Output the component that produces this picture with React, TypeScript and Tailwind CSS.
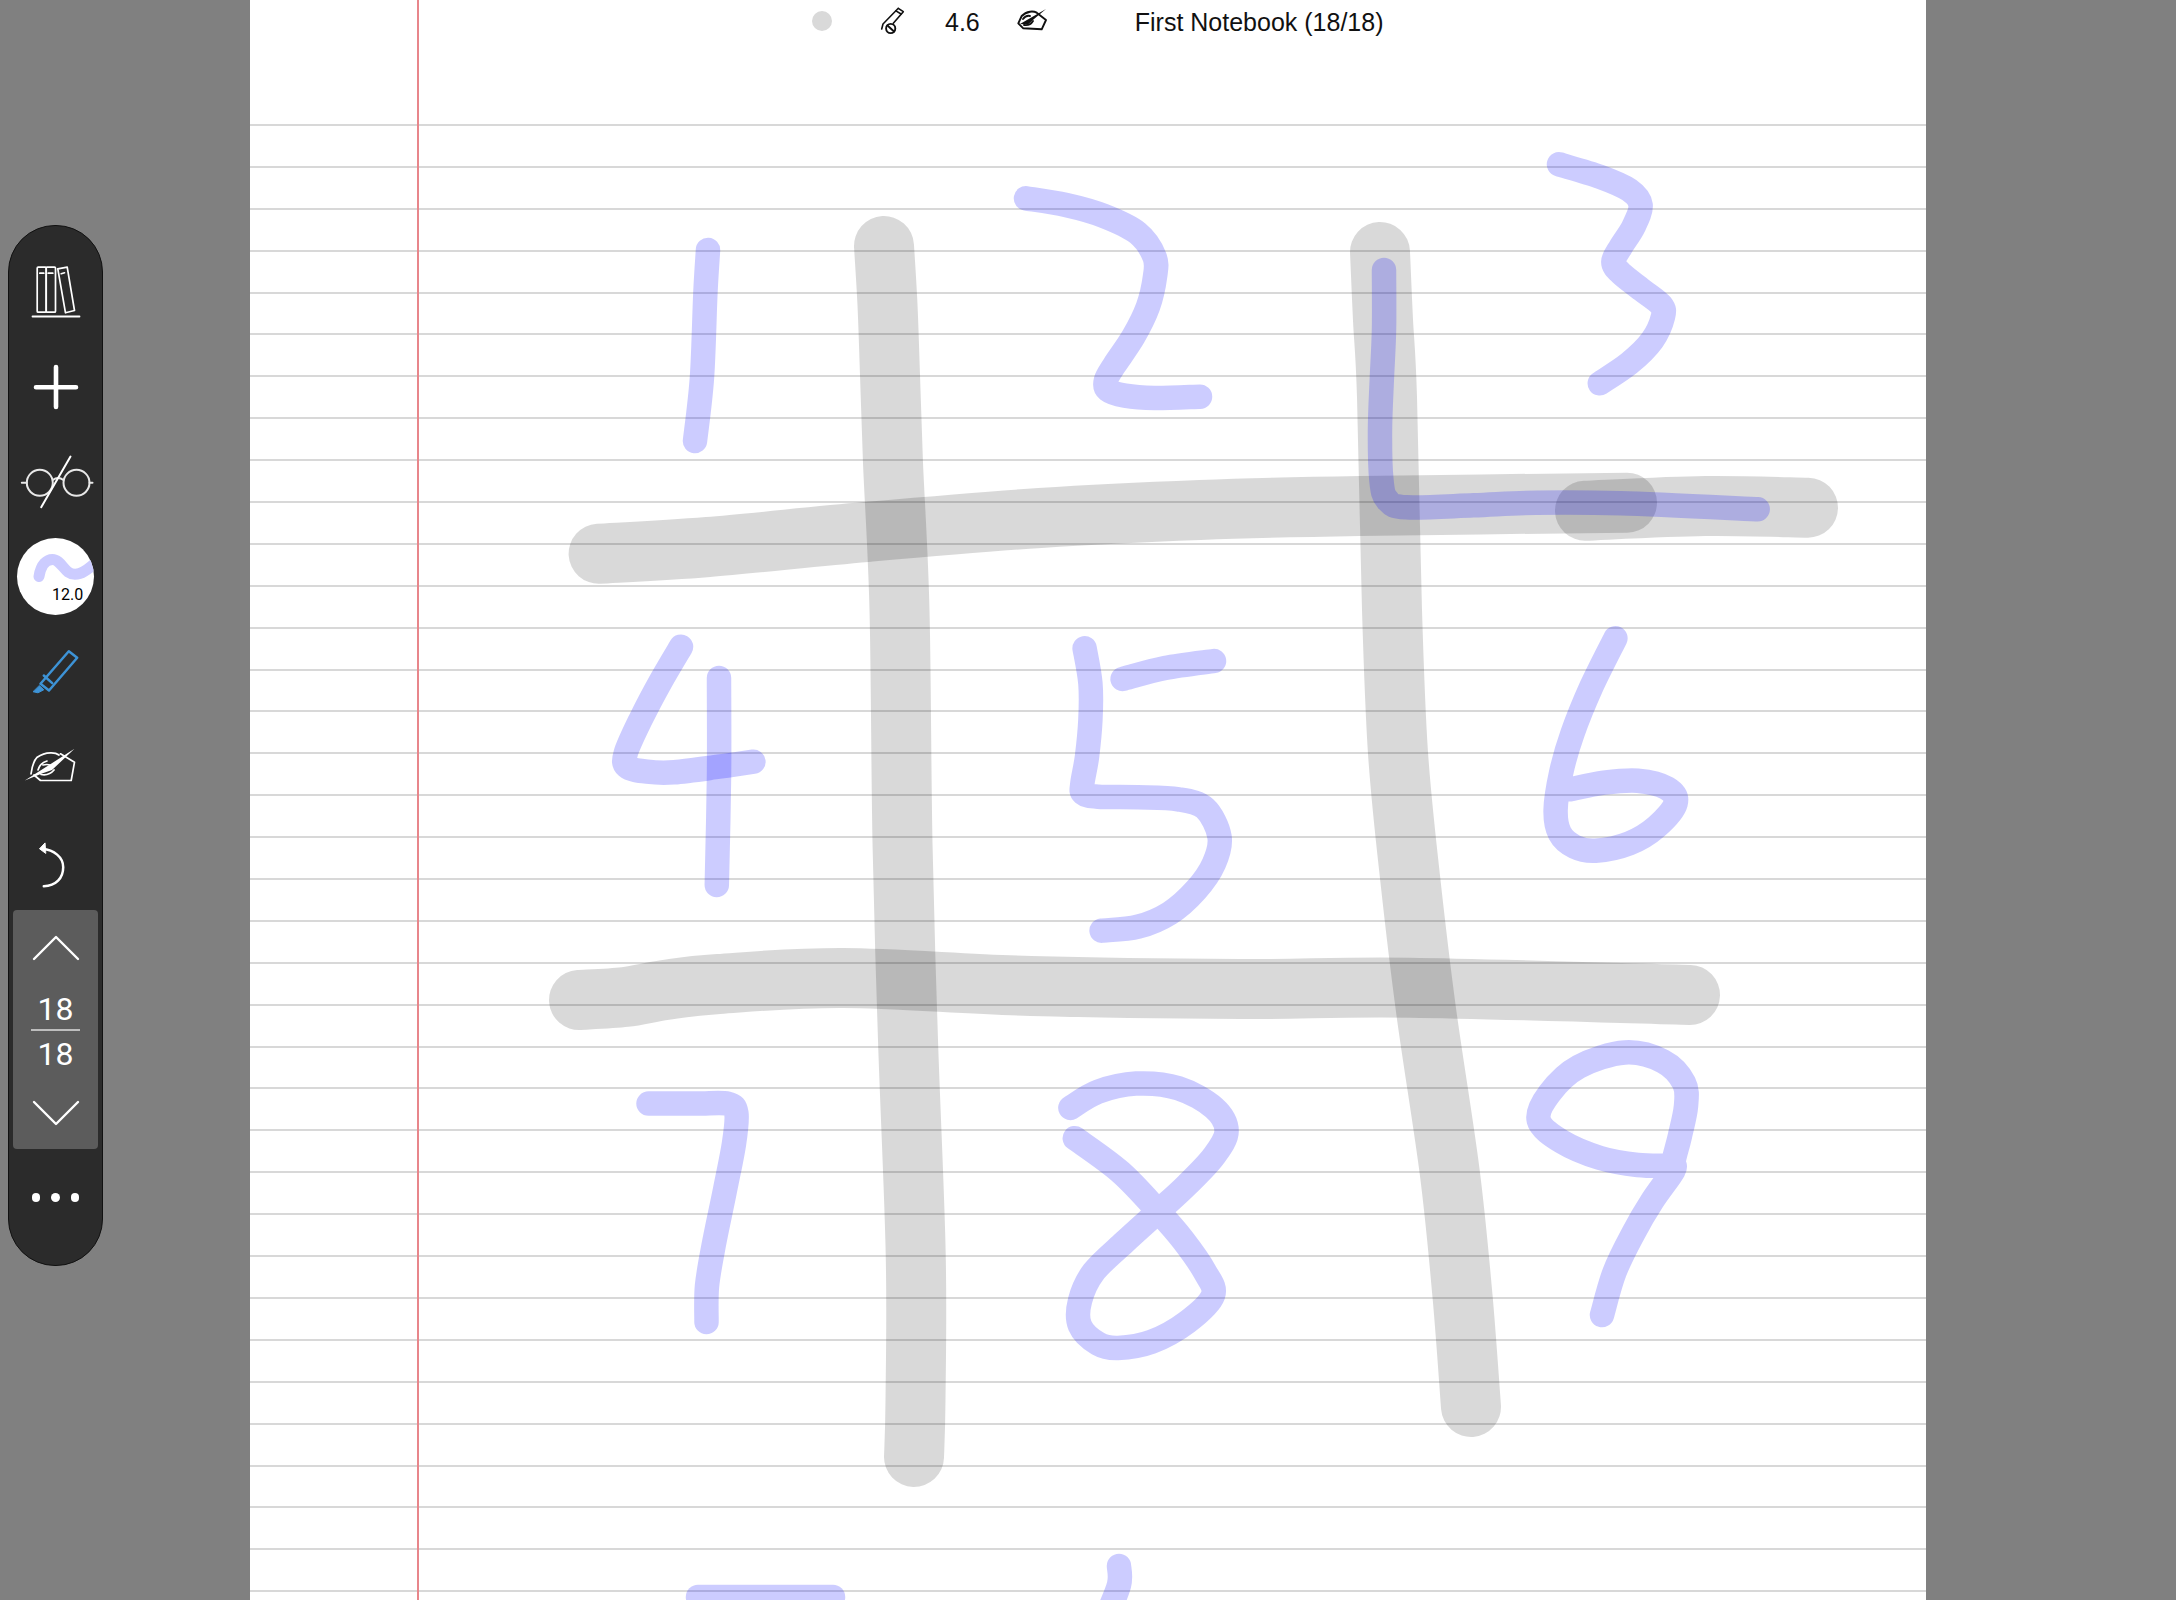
import React from "react";

type P = [number, number];

// Catmull-Rom through the sampled points of a handwritten stroke
function smooth(pts: P[]): string {
  let d = `M${pts[0][0]} ${pts[0][1]}`;
  for (let i = 0; i < pts.length - 1; i++) {
    const p0 = pts[i - 1] || pts[i];
    const p1 = pts[i];
    const p2 = pts[i + 1];
    const p3 = pts[i + 2] || p2;
    const c1x = p1[0] + (p2[0] - p0[0]) / 6;
    const c1y = p1[1] + (p2[1] - p0[1]) / 6;
    const c2x = p2[0] - (p3[0] - p1[0]) / 6;
    const c2y = p2[1] - (p3[1] - p1[1]) / 6;
    d += ` C${c1x.toFixed(1)} ${c1y.toFixed(1)} ${c2x.toFixed(1)} ${c2y.toFixed(1)} ${p2[0]} ${p2[1]}`;
  }
  return d;
}

const gray: P[][] = [
  [[884, 246], [887.5, 305], [890, 375], [893, 463], [899.5, 610], [902.5, 843], [908, 1040], [915.7, 1254], [915.5, 1400], [914, 1457]],
  [[598.6, 553.7], [708, 547], [866, 532], [1040, 518], [1200, 510], [1360, 506], [1627, 502.7]],
  [[1585, 510.7], [1705, 506], [1808, 507.7]],
  [[1380, 252], [1383, 320], [1387, 397], [1392, 610], [1398, 753], [1410, 877], [1426, 1010], [1449.7, 1172], [1462.6, 1297], [1471, 1407]],
  [[579, 1000], [625, 997], [665, 990], [718.6, 984], [843.6, 978], [1031, 986], [1240, 989], [1410, 987.7], [1690, 995]],
];

const blue: P[][] = [
  [[708, 250], [705.4, 293], [702, 377], [695, 441]],
  [[1026, 198.3], [1066, 205], [1104, 216], [1137.6, 233], [1154.5, 256.7], [1155, 276.7], [1148, 306.7], [1133.4, 336.7], [1114.5, 365], [1106, 380], [1108, 390], [1125, 395.7], [1154.5, 398], [1200, 396.7]],
  [[1559, 164.3], [1599.8, 176.7], [1629.3, 190], [1640.6, 205], [1633.5, 226.7], [1620.9, 246.7], [1613.3, 261.7], [1620.9, 273.3], [1642, 290], [1661, 305], [1663, 316.7], [1652.4, 340], [1629.3, 363.3], [1599.8, 383.3]],
  [[1384, 270], [1384, 330], [1381.8, 380], [1380, 430], [1381.4, 480], [1387.3, 500], [1406.2, 507.3], [1473.6, 505.3], [1536.7, 502.7], [1620.9, 503.3], [1757.7, 509.3]],
  [[681, 646.7], [660.5, 681.7], [640.4, 720], [625.7, 753.3], [627, 766.7], [647, 771.7], [674, 772.3], [718.6, 766.7], [753.4, 761.7]],
  [[719, 678], [719, 777], [716.8, 885]],
  [[1084.6, 648.3], [1090.4, 683.3], [1090.4, 720], [1087, 756.7], [1082.4, 783.3], [1083.3, 793.3], [1098, 796.7], [1138, 797.3], [1178.4, 799.3], [1205, 808.3], [1219.5, 836.7], [1214, 863.3], [1196, 890], [1169.5, 913.3], [1138, 926.7], [1101.6, 930.7]],
  [[1122.6, 679], [1165, 668], [1214, 661]],
  [[1615.4, 638.3], [1591.4, 686.7], [1572.5, 733.3], [1561, 773.3], [1555.6, 810], [1559.8, 833.3], [1574.6, 846.7], [1595.6, 850.7], [1629.3, 843.3], [1656.6, 826.7], [1675.6, 803.3], [1667, 788.3], [1637.7, 780.7], [1604, 782.7], [1570.4, 789.3]],
  [[648.5, 1103.6], [696, 1103.6], [727.5, 1103.6], [736.4, 1113.2], [734, 1143.6], [725, 1190], [714, 1243.6], [707, 1286], [706.5, 1322]],
  [[1070.4, 1107.9], [1098, 1091.8], [1136, 1083.6], [1178.4, 1088.2], [1214, 1107.9], [1226.6, 1131], [1214, 1156], [1187.3, 1184.6], [1158.3, 1211.4], [1124.8, 1241.8], [1093.6, 1272], [1080, 1300.7], [1080, 1325.7], [1098, 1343.6], [1118, 1347.9], [1151.6, 1341.8], [1187.3, 1322], [1213, 1295.4], [1205, 1272], [1183, 1240], [1158.3, 1211.4], [1120.4, 1172], [1074.8, 1138.2]],
  [[1673.5, 1165.7], [1637.7, 1165], [1599.8, 1157.9], [1562, 1141.8], [1538.8, 1120.4], [1549.3, 1093.6], [1578.8, 1066.8], [1625, 1052.5], [1663, 1061.4], [1684, 1082.9], [1686, 1106], [1679.8, 1136.4], [1673.5, 1161.4], [1673.5, 1170.4], [1652.4, 1200.7], [1633.5, 1232.9], [1614.6, 1272], [1602, 1315]],
  [[698, 1597], [833, 1597]],
  [[1119, 1566], [1119, 1585], [1105, 1620]],
];

function Ink() {
  return (
    <svg className="absolute left-0 top-0" width="1676" height="1600" viewBox="250 0 1676 1600" fill="none" strokeLinecap="round" strokeLinejoin="round">
      {gray.map((s, i) => (
        <path key={i} d={smooth(s)} stroke="#000" strokeOpacity="0.15" strokeWidth="60" />
      ))}
      {blue.map((s, i) => (
        <path key={i} d={smooth(s)} stroke="#00f" strokeOpacity="0.2" strokeWidth="24.5" />
      ))}
    </svg>
  );
}

function Shelf() {
  return (
    <svg width="80" height="80" viewBox="0 0 80 80" fill="none" stroke="#fff" strokeWidth="1.7" strokeLinejoin="round" strokeLinecap="round">
      <rect x="21.2" y="15.2" width="9" height="45" rx="1" />
      <rect x="30.2" y="15.2" width="9.3" height="45" rx="1" />
      <path d="M41.8 16.8 L51.2 15.2 L58.5 58.5 L49.5 60.8 Z" />
      <path d="M23.8 21.2 H27.8 M32.2 21.2 H36.8 M45.2 21.7 L48.5 20.8" />
      <path d="M16.5 64.5 H63.5" strokeWidth="1.8" />
    </svg>
  );
}

function Plus() {
  return (
    <svg width="80" height="80" viewBox="0 0 80 80" fill="none" stroke="#fff" strokeWidth="4.6" strokeLinecap="round">
      <path d="M40 20 V60 M20 40.2 H60" />
    </svg>
  );
}

function Glasses() {
  return (
    <svg width="80" height="80" viewBox="0 0 80 80" fill="none" stroke="#e8e8e8" strokeWidth="2" strokeLinecap="round">
      <circle cx="23.8" cy="40.8" r="13" />
      <circle cx="60.5" cy="40.8" r="13" />
      <path d="M5.8 40.8 H10.8 M73.5 40.8 H76.5 M36.8 38 Q42 34 47.5 38" />
      <path d="M54.5 14.5 L25.2 65.2" stroke="#fff" />
    </svg>
  );
}

function Highlighter() {
  return (
    <svg width="80" height="80" viewBox="0 0 80 80" fill="none" stroke="#3d93d6" strokeWidth="2.5" strokeLinejoin="round" strokeLinecap="round">
      <path d="M52.8 19.2 L61.2 25.8 L33 58.5 L24.5 51.8 Z" />
      <path d="M27.8 43.5 L36.2 51.2" />
      <path d="M23.5 53.8 L27.8 57.8 L22 60.8 L17.4 59.8 Z" fill="#3d93d6" strokeWidth="1" />
    </svg>
  );
}

function HandPen() {
  return (
    <svg width="80" height="80" viewBox="0 0 80 80" fill="none" stroke="#fff" strokeWidth="1.7" strokeLinejoin="round" strokeLinecap="round">
      <path d="M44.5 26.8 L58.5 35.2 L55.2 53.5 L24.5 53.5 L18 48" />
      <path d="M15 47 Q16.5 35 21.2 30.2 Q27 26 34.5 25.8 Q40 25.6 43 28" />
      <path d="M8.8 53.5 L58.5 21.8 L36 43 L26 46.5 Z" fill="#fff" stroke="none" />
      <path d="M22 43 Q24 36 31 34 M25 47.5 Q33 49 38 43 M27 38 Q31 37 34 38" />
    </svg>
  );
}

function Undo() {
  return (
    <svg width="80" height="80" viewBox="0 0 80 80" fill="none" stroke="#fff" strokeWidth="2.5" strokeLinecap="round">
      <path d="M27.8 64.2 C40 64 47.2 56 47.2 45.2 C47.2 35 38 28 26.2 26.8" />
      <path d="M28.8 21.2 L23.5 26.8 L29.5 31.2 Z" fill="#fff" stroke="#fff" strokeWidth="1" strokeLinejoin="round" />
    </svg>
  );
}

function ToolButton({ children }: { children: React.ReactNode }) {
  return <div className="flex h-[95px] w-full shrink-0 items-center justify-center">{children}</div>;
}

function Toolbar() {
  return (
    <div className="absolute left-[8px] top-[225px] flex h-[1041px] w-[95px] flex-col items-center rounded-[47px] border border-[#111] bg-[#2b2b2b] pt-[18px] font-['Roboto',sans-serif]">
      <ToolButton><Shelf /></ToolButton>
      <ToolButton><Plus /></ToolButton>
      <ToolButton><Glasses /></ToolButton>
      <ToolButton>
        <div className="relative h-[77px] w-[77px] overflow-hidden rounded-full bg-white">
          <svg width="77" height="77" viewBox="0 0 77 77" fill="none">
            <path d="M22 38.5 C24 26 30 21.5 35.5 21.5 C42 21.5 46 30 51 34 C58 39 66 36 78 25" stroke="#ccf" strokeWidth="11" strokeLinecap="round" />
          </svg>
          <span className="absolute left-[35px] top-[47px] text-[16px] leading-[19px] text-black">12.0</span>
        </div>
      </ToolButton>
      <ToolButton><Highlighter /></ToolButton>
      <ToolButton><HandPen /></ToolButton>
      <ToolButton><Undo /></ToolButton>
      <div className="mt-[1px] flex h-[239px] w-[85px] shrink-0 flex-col items-center rounded-[4px] bg-[#5c5c5c] text-white">
        <svg className="mt-[25px] shrink-0" width="48" height="26" viewBox="0 0 48 26" fill="none" stroke="#fff" strokeWidth="2.4" strokeLinecap="round" strokeLinejoin="round">
          <path d="M2 24 L24 2 L46 24" />
        </svg>
        <div className="mt-[30px] text-[32px] leading-[36px]">18</div>
        <div className="mt-[2px] h-[2px] w-[49px] shrink-0 bg-[#bdbdbd]" />
        <div className="mt-[5px] text-[32px] leading-[36px]">18</div>
        <svg className="mt-[28px] shrink-0" width="48" height="26" viewBox="0 0 48 26" fill="none" stroke="#fff" strokeWidth="2.4" strokeLinecap="round" strokeLinejoin="round">
          <path d="M2 2 L24 24 L46 2" />
        </svg>
      </div>
      <div className="mt-[44px] flex gap-[11px]">
        <span className="h-[8.5px] w-[8.5px] rounded-full bg-white" />
        <span className="h-[8.5px] w-[8.5px] rounded-full bg-white" />
        <span className="h-[8.5px] w-[8.5px] rounded-full bg-white" />
      </div>
    </div>
  );
}

function PencilOff() {
  return (
    <svg width="26" height="28" viewBox="0 0 26 28" fill="none" stroke="#111" strokeWidth="1.6" strokeLinejoin="round" strokeLinecap="round">
      <path d="M18.3 1.3 L23.3 4.7 L13.3 16.3 M18.3 1.3 L3 17 L1.7 22" />
      <path d="M16 3.8 L21 7" />
      <circle cx="10.7" cy="21.5" r="4.6" strokeWidth="1.9" />
      <path d="M7.5 18.5 L14 24.5" strokeWidth="1.9" />
    </svg>
  );
}

function SmallHandPen() {
  return (
    <svg width="32" height="24" viewBox="0 0 32 24" fill="none" stroke="#111" strokeWidth="1.9" strokeLinejoin="round" strokeLinecap="round">
      <path d="M20.7 4.7 L30 12 L25.7 21.3 L7.3 20.3 L2.3 15.3 L5.7 8 Q9 4.5 14 3.7 Q18 3.2 20.7 4.7" />
      <path d="M4 16 L30 1 L18 11 L12 16.5 Z" fill="#111" stroke="none" />
      <path d="M7 11 Q10 7 14 8 M8 17 Q14 18 17 13" />
    </svg>
  );
}

export default function App() {
  const rules = Array.from({ length: 36 }, (_, i) => i);
  return (
    <div className="relative flex h-[1600px] w-[2176px] justify-center overflow-hidden bg-[#808080] font-['Roboto',sans-serif]">
      <div className="relative flex h-[1600px] w-[1676px] flex-col overflow-hidden bg-white">
        <div className="flex h-[124px] shrink-0 items-start pl-[562px] pt-[7px] font-['Liberation_Sans',Arial,sans-serif] text-[25px] leading-[28px] text-[#111]">
          <span className="mt-[4px] h-[20px] w-[20px] shrink-0 rounded-full bg-[#d9d9d9]" />
          <span className="ml-[48px] shrink-0"><PencilOff /></span>
          <span className="ml-[39px] mt-[1px] shrink-0">4.6</span>
          <span className="ml-[36px] mt-[1px] shrink-0"><SmallHandPen /></span>
          <span className="ml-[87px] mt-[1px] shrink-0 whitespace-nowrap">First Notebook (18/18)</span>
        </div>
        {rules.map((i) => (
          <div key={i} className="h-[41.9px] shrink-0 border-t-2 border-[#d8d8d8]" />
        ))}
        <div className="absolute left-[167px] top-0 h-full w-[2px] bg-[#e8868b]" />
        <Ink />
      </div>
      <Toolbar />
    </div>
  );
}
